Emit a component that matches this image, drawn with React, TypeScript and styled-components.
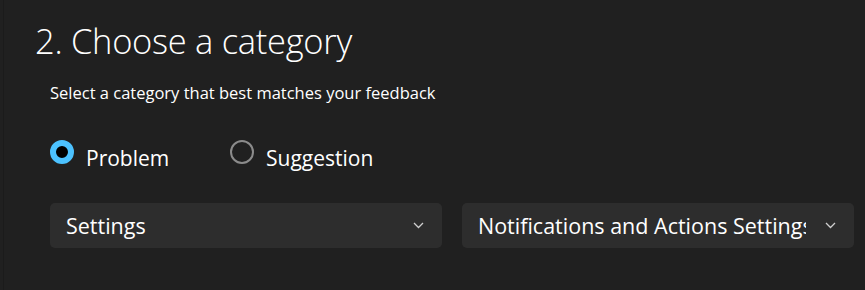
import React, { useState } from 'react'
import styled, { createGlobalStyle } from 'styled-components'

const GlobalStyle = createGlobalStyle`
  html, body {
    margin: 0;
    padding: 0;
    background: #202020;
  }
  body {
    font-family: 'Open Sans', 'Noto Sans', sans-serif;
    color: #ffffff;
  }
`

const Page = styled.div`
  margin-left: 3px;
  border-left: 1px solid #1b1b1b;
  height: 290px;
  box-sizing: border-box;
  padding: 18px 0 0 31px;
`

const Title = styled.h2`
  margin: 0;
  font-size: 34.5px;
  font-weight: 300;
  line-height: 46px;
  letter-spacing: -0.3px;
`

const Section = styled.div`
  padding-left: 15px;
`

const Subtitle = styled.p`
  margin: 18px 0 0;
  font-size: 16.5px;
  line-height: 22px;
`

const RadioRow = styled.div`
  display: flex;
  margin-top: 36px;
`

const RadioItem = styled.label`
  display: flex;
  align-items: flex-start;
  gap: 12px;
  min-width: 180px;
  font-size: 21px;
  line-height: 28px;
  cursor: pointer;
`

const RadioText = styled.span`
  margin-top: 4px;
`

const RadioCircle = styled.span<{ $checked: boolean }>`
  box-sizing: border-box;
  width: 24px;
  height: 24px;
  border-radius: 50%;
  background: ${({ $checked }) => ($checked ? '#000' : 'transparent')};
  border: ${({ $checked }) => ($checked ? '6px solid #4cc2ff' : '2px solid #8b8b8b')};
`

const DropRow = styled.div`
  display: grid;
  grid-template-columns: 392px 392px;
  gap: 20px;
  margin-top: 31px;
`

const Select = styled.div`
  display: flex;
  align-items: center;
  height: 45px;
  box-sizing: border-box;
  padding: 0 18px 0 16px;
  background: #2d2d2d;
  border-radius: 5px;
  font-size: 21.5px;
  cursor: pointer;
`

const SelectText = styled.span`
  flex: 1;
  white-space: nowrap;
  overflow: hidden;
  margin-right: 19px;
`

const Chevron = () => (
  <svg width="11" height="7" viewBox="0 0 11 7">
    <polyline points="1,1 5.5,5.5 10,1" fill="none" stroke="#cfcfcf" strokeWidth="1.3" />
  </svg>
)

export default function App() {
  const [kind, setKind] = useState('Problem')
  return (
    <>
      <GlobalStyle />
      <Page>
        <Title>2. Choose a category</Title>
        <Section>
          <Subtitle>Select a category that best matches your feedback</Subtitle>
          <RadioRow>
            {['Problem', 'Suggestion'].map((k) => (
              <RadioItem key={k} onClick={() => setKind(k)}>
                <RadioCircle $checked={kind === k} />
                <RadioText>{k}</RadioText>
              </RadioItem>
            ))}
          </RadioRow>
          <DropRow>
            <Select>
              <SelectText>Settings</SelectText>
              <Chevron />
            </Select>
            <Select>
              <SelectText>Notifications and Actions Settings</SelectText>
              <Chevron />
            </Select>
          </DropRow>
        </Section>
      </Page>
    </>
  )
}
